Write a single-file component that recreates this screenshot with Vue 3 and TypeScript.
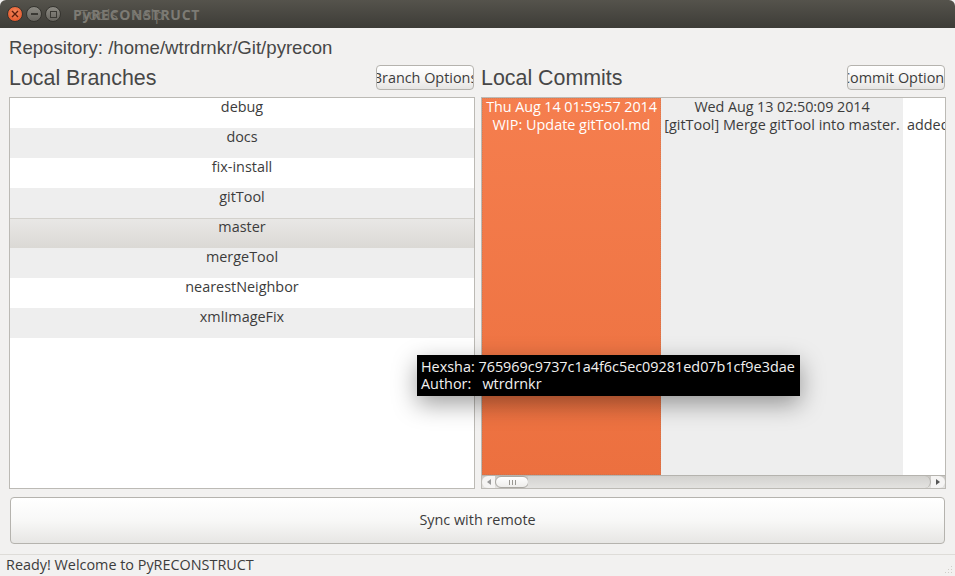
<script setup lang="ts">
const branches = [
  "debug",
  "docs",
  "fix-install",
  "gitTool",
  "master",
  "mergeTool",
  "nearestNeighbor",
  "xmlImageFix",
];

const commits = [
  { date: "Thu Aug 14 01:59:57 2014", message: "WIP: Update gitTool.md", kind: "current" },
  { date: "Wed Aug 13 02:50:09 2014", message: "[gitTool] Merge gitTool into master.", kind: "alt" },
  { date: "", message: "added gitTool", kind: "plain" },
];
</script>

<template>
  <div class="window">
    <header class="titlebar">
      <div class="controls">
        <span class="ctl close">
          <svg width="8" height="8" viewBox="0 0 8 8"><path d="M1 1l6 6M7 1l-6 6" stroke="#5b1d0c" stroke-width="1.4" /></svg>
        </span>
        <span class="ctl"><i class="min"></i></span>
        <span class="ctl"><i class="max"></i></span>
      </div>
      <div class="title">
        <span class="title-text">PyRECONSTRUCT</span>
        <span class="menu"><span>Tools</span><span>Help</span></span>
      </div>
    </header>

    <main class="content">
      <div class="repo">Repository: /home/wtrdrnkr/Git/pyrecon</div>

      <div class="panes">
        <section class="pane">
          <div class="pane-head">
            <h2>Local Branches</h2>
            <button class="opt-btn"><span>Branch Options</span></button>
          </div>
          <ul class="branches">
            <li
              v-for="(b, i) in branches"
              :key="b"
              :class="{ odd: i % 2 === 1, selected: b === 'master' }"
            >
              {{ b }}
            </li>
          </ul>
        </section>

        <section class="pane">
          <div class="pane-head">
            <h2>Local Commits</h2>
            <button class="opt-btn"><span>Commit Options</span></button>
          </div>
          <div class="commits">
            <div class="commit-row">
              <div v-for="c in commits" :key="c.message" class="commit" :class="c.kind">
                <div class="commit-date">{{ c.date }}</div>
                <div>{{ c.message }}</div>
              </div>
            </div>
            <div class="scrollbar">
              <span class="arrow left">
                <svg width="4" height="6" viewBox="0 0 4 6"><path d="M4 0v6L0 3z" fill="#999" /></svg>
              </span>
              <span class="thumb"><i></i><i></i><i></i></span>
              <span class="track"></span>
              <span class="arrow right">
                <svg width="4" height="6" viewBox="0 0 4 6"><path d="M0 0v6l4-3z" fill="#555" /></svg>
              </span>
            </div>
          </div>
        </section>
      </div>

      <button class="sync"><span>Sync with remote</span></button>
    </main>

    <footer class="status">
      <span>Ready! Welcome to PyRECONSTRUCT</span>
      <svg class="grip" width="10" height="10" viewBox="0 0 10 10">
        <path d="M8 1h1v1H8zM5 4h1v1H5zM8 4h1v1H8zM2 7h1v1H2zM5 7h1v1H5zM8 7h1v1H8z" fill="#cfcdc8" />
      </svg>
    </footer>

    <div class="tooltip">
      <div>Hexsha: 765969c9737c1a4f6c5ec09281ed07b1cf9e3dae</div>
      <div>Author:&nbsp;&nbsp; wtrdrnkr</div>
    </div>
  </div>
</template>

<style>
html,
body {
  margin: 0;
  overflow: hidden;
}
</style>

<style scoped>
.window {
  position: relative;
  width: 955px;
  height: 576px;
  display: flex;
  flex-direction: column;
  background: #f2f1f0;
  color: #3c3c3c;
  font-family: "Open Sans", "DejaVu Sans", sans-serif;
  font-size: 14.4px;
  overflow: hidden;
}

.titlebar {
  height: 28px;
  flex: none;
  display: flex;
  align-items: center;
  padding-left: 7px;
  box-sizing: border-box;
  background: linear-gradient(#55534c, #3d3c37);
  border-radius: 6px 6px 0 0;
}

.controls {
  display: flex;
  gap: 3px;
}

.ctl {
  width: 16px;
  height: 16px;
  border-radius: 50%;
  background: linear-gradient(#8c8a83, #66645e);
  border: 1px solid #35342f;
  box-sizing: border-box;
  display: flex;
  align-items: center;
  justify-content: center;
}

.close {
  background: radial-gradient(circle at 50% 40%, #f58a5e, #de4a1e);
}

.min {
  width: 7px;
  height: 2px;
  background: #3a3934;
}

.max {
  width: 5px;
  height: 5px;
  border: 1px solid #3a3934;
}

.title {
  position: relative;
  margin-left: 12px;
  font-family: "Open Sans", sans-serif;
  font-size: 14px;
  font-weight: 700;
  letter-spacing: 0.7px;
  color: #7d7b74;
}

.menu {
  position: absolute;
  left: 7px;
  top: 0;
  display: flex;
  gap: 13px;
  font-weight: 400;
  color: #75736c;
}

.content {
  flex: 1;
  display: flex;
  flex-direction: column;
  padding: 0 9px 10px;
  min-height: 0;
}

.repo {
  font-family: "Liberation Sans", Arial, sans-serif;
  font-size: 18.6px;
  line-height: 21px;
  margin-top: 9px;
  color: #474747;
}

.panes {
  flex: 1;
  display: grid;
  grid-template-columns: 466px 465px;
  gap: 6px;
  min-height: 0;
  margin-top: 5px;
}

.pane {
  display: flex;
  flex-direction: column;
  min-width: 0;
}

.pane-head {
  height: 34px;
  box-sizing: border-box;
  padding-bottom: 4px;
  flex: none;
  display: flex;
  align-items: center;
  justify-content: space-between;
}

.pane-head h2 {
  margin: 0;
  font-family: "Liberation Sans", Arial, sans-serif;
  font-size: 21.4px;
  font-weight: 400;
  color: #474747;
}

.opt-btn {
  width: 98px;
  height: 25px;
  padding: 0;
  display: flex;
  justify-content: center;
  align-items: center;
  overflow: hidden;
  white-space: nowrap;
  font: inherit;
  color: inherit;
  background: linear-gradient(#fff, #f4f3f2 60%, #e6e5e3);
  border: 1px solid #b5b3ae;
  border-radius: 4px;
  margin: -2px 1px 0 0;
}

.opt-btn span {
  flex: none;
}

.branches {
  flex: 1;
  margin: 0;
  padding: 0;
  list-style: none;
  background: #fff;
  border: 1px solid #bcbab5;
  min-height: 0;
}

.branches li {
  height: 30px;
  line-height: 18px;
  text-align: center;
  background: #fff;
}

.branches li.odd {
  background: #eeeeee;
}

.branches li.selected {
  background: linear-gradient(#e9e8e6, #dbd9d5);
  box-shadow: inset 0 1px 0 #d3d1cc;
}

.commits {
  flex: 1;
  display: flex;
  flex-direction: column;
  background: #fff;
  border: 1px solid #bcbab5;
  min-height: 0;
  min-width: 0;
}

.commit-row {
  flex: 1;
  display: flex;
  overflow: hidden;
  min-height: 0;
}

.commit {
  flex: none;
  text-align: center;
  white-space: nowrap;
  line-height: 18px;
}

.commit-date {
  min-height: 18px;
  letter-spacing: -0.08px;
}

.commit.current {
  width: 179px;
  color: #fff;
  background: linear-gradient(#f57e4e, #ec703f);
  outline: 1px dotted rgba(150, 120, 100, 0.3);
  outline-offset: -1px;
}

.commit.alt {
  width: 242px;
  background: #eeeeee;
}

.commit.plain {
  padding-left: 4px;
}

.scrollbar {
  height: 13px;
  flex: none;
  display: flex;
  align-items: center;
  background: linear-gradient(#c9c7c3, #e4e3e1);
  border-top: 1px solid #b5b3ae;
  position: relative;
  box-sizing: border-box;
}

.track {
  flex: 1;
  align-self: stretch;
  background: linear-gradient(#d3d2cf, #e3e2e0);
  border-radius: 0 7px 7px 0;
  border-right: 1px solid #b5b3ae;
}

.arrow {
  width: 14px;
  height: 12px;
  flex: none;
  display: flex;
  align-items: center;
  justify-content: center;
  background: #f5f4f3;
}

.arrow.left {
  border-radius: 7px 0 0 7px;
  width: 13px;
}

.arrow.right {
  border-radius: 0 7px 7px 0;
}

.thumb {
  width: 34px;
  height: 12px;
  flex: none;
  margin-right: -1px;
  display: flex;
  align-items: center;
  justify-content: center;
  gap: 2px;
  box-sizing: border-box;
  background: linear-gradient(#fff, #eeedeb);
  border: 1px solid #a9a7a2;
  border-radius: 7px;
}

.thumb i {
  width: 1px;
  height: 5px;
  background: #9a9892;
}

.sync {
  height: 47px;
  flex: none;
  margin-top: 8px;
  margin-left: 1px;
  width: 935px;
  padding: 0 0 2px;
  font: inherit;
  color: inherit;
  background: linear-gradient(#fff, #f8f8f7 50%, #e7e6e4);
  border: 1px solid #b5b3ae;
  border-radius: 4px;
}

.status {
  position: relative;
  flex: none;
  height: 21px;
  padding-left: 6px;
  line-height: 20px;
  border-top: 1px solid #dedcd8;
}

.grip {
  position: absolute;
  right: 2px;
  bottom: 1px;
}

.tooltip {
  position: absolute;
  left: 417px;
  top: 355px;
  width: 383px;
  height: 41px;
  box-sizing: border-box;
  padding: 3px 4px;
  background: #000;
  color: #f2f1f0;
  line-height: 17px;
  white-space: nowrap;
  box-shadow: 0 8px 24px rgba(0, 0, 0, 0.38);
}
</style>
